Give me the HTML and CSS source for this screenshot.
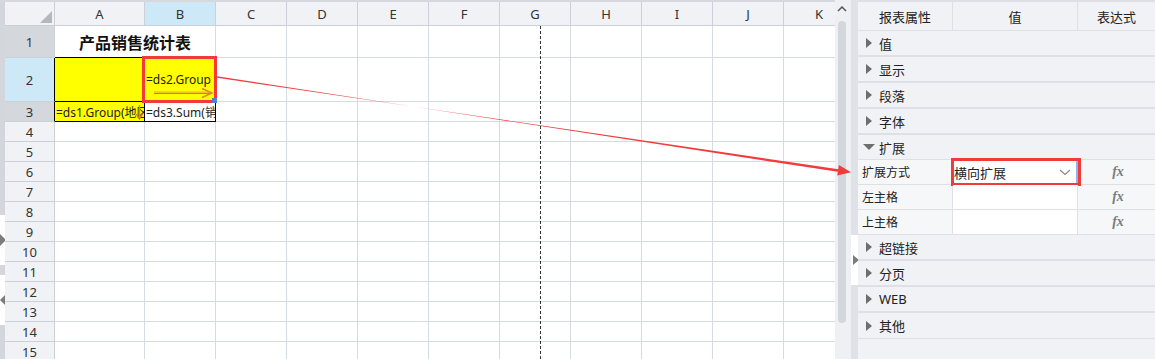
FILE: index.html
```html
<!doctype html>
<html>
<head>
<meta charset="utf-8">
<link rel="stylesheet" href="styles.css">
</head>
<body>
<div class="app">
	<div class="sheet">
		<div class="edge">
			<span class="edge-gap top"></span>
			<span class="edge-tab"><i class="tri-r"></i></span>
			<span class="edge-gap mid"></span>
			<span class="edge-tab"><i class="tri-l"></i></span>
			<span class="edge-gap rest"></span>
		</div>
		<table class="grid">
			<colgroup>
				<col class="c-hd"><col class="c-a"><col class="c-n" span="10">
			</colgroup>
			<tr class="r-hd"><th class="corner"></th><th>A</th><th class="sel">B</th><th>C</th><th>D</th><th>E</th><th>F</th><th>G</th><th>H</th><th>I</th><th>J</th><th>K</th></tr>
			<tr class="r1"><th class="dk">1</th><td colspan="2" class="title">产品销售统计表</td><td></td><td></td><td></td><td></td><td></td><td></td><td></td><td></td><td></td></tr>
			<tr class="r2"><th class="sel bdr">2</th><td class="ylw bd"></td><td class="ylw bd b2">=ds2.Group
				<svg class="expand-h" width="62" height="12" viewBox="0 0 62 12"><path d="M1 6.5 H58" stroke="#d9782a" stroke-width="1.2"/><path d="M1 5.2 H57" stroke="#f0b040" stroke-width="1.2"/><path d="M49 1.5 L59 6 L49 10.5" fill="none" stroke="#e0862c" stroke-width="1.4"/></svg>
				<span class="handle"></span></td><td></td><td></td><td></td><td></td><td></td><td></td><td></td><td></td><td></td></tr>
			<tr class="r3"><th class="dk bdr">3</th><td class="ylw bd a3">=ds1.Group(地区)
				<svg class="expand-v" width="7" height="15" viewBox="0 0 7 15"><path d="M3.5 0 V13" stroke="#e08a2c" stroke-width="1.4"/><path d="M0.5 9 L3.5 14 L6.5 9" fill="none" stroke="#d9702a" stroke-width="1.3"/></svg></td><td class="bd">=ds3.Sum(销量)</td><td></td><td></td><td></td><td></td><td></td><td></td><td></td><td></td><td></td></tr>
			<tr><th>4</th><td></td><td></td><td></td><td></td><td></td><td></td><td></td><td></td><td></td><td></td><td></td></tr>
			<tr><th>5</th><td></td><td></td><td></td><td></td><td></td><td></td><td></td><td></td><td></td><td></td><td></td></tr>
			<tr><th>6</th><td></td><td></td><td></td><td></td><td></td><td></td><td></td><td></td><td></td><td></td><td></td></tr>
			<tr><th>7</th><td></td><td></td><td></td><td></td><td></td><td></td><td></td><td></td><td></td><td></td><td></td></tr>
			<tr><th>8</th><td></td><td></td><td></td><td></td><td></td><td></td><td></td><td></td><td></td><td></td><td></td></tr>
			<tr><th>9</th><td></td><td></td><td></td><td></td><td></td><td></td><td></td><td></td><td></td><td></td><td></td></tr>
			<tr><th>10</th><td></td><td></td><td></td><td></td><td></td><td></td><td></td><td></td><td></td><td></td><td></td></tr>
			<tr><th>11</th><td></td><td></td><td></td><td></td><td></td><td></td><td></td><td></td><td></td><td></td><td></td></tr>
			<tr><th>12</th><td></td><td></td><td></td><td></td><td></td><td></td><td></td><td></td><td></td><td></td><td></td></tr>
			<tr><th>13</th><td></td><td></td><td></td><td></td><td></td><td></td><td></td><td></td><td></td><td></td><td></td></tr>
			<tr><th>14</th><td></td><td></td><td></td><td></td><td></td><td></td><td></td><td></td><td></td><td></td><td></td></tr>
			<tr><th>15</th><td></td><td></td><td></td><td></td><td></td><td></td><td></td><td></td><td></td><td></td><td></td></tr>
		</table>
		<div class="page-break"></div>
	</div>

	<div class="vscroll">
		<svg class="up" width="10" height="7" viewBox="0 0 10 7"><path d="M1 6 L5 2 L9 6" fill="none" stroke="#555" stroke-width="1.5"/></svg>
		<span class="thumb"></span>
	</div>

	<div class="splitter">
		<span class="split-gap top"></span>
		<span class="split-tab"><i class="tri-r"></i></span>
		<span class="split-gap rest"></span>
	</div>

	<div class="panel">
		<div class="phead"><span>报表属性</span><span>值</span><span>表达式</span></div>
		<div class="sec"><i class="arr"></i>值</div>
		<div class="sec"><i class="arr"></i>显示</div>
		<div class="sec"><i class="arr"></i>段落</div>
		<div class="sec"><i class="arr"></i>字体</div>
		<div class="sec open"><i class="arr-down"></i>扩展</div>
		<div class="prop">
			<span class="p-name">扩展方式</span>
			<span class="p-val picked">横向扩展
				<svg class="chev" width="12" height="7" viewBox="0 0 12 7"><path d="M1 1 L6 5.5 L11 1" fill="none" stroke="#8a8a8a" stroke-width="1.2"/></svg>
			</span>
			<span class="p-fx">fx</span>
		</div>
		<div class="prop">
			<span class="p-name">左主格</span>
			<span class="p-val"></span>
			<span class="p-fx">fx</span>
		</div>
		<div class="prop">
			<span class="p-name">上主格</span>
			<span class="p-val"></span>
			<span class="p-fx">fx</span>
		</div>
		<div class="sec"><i class="arr"></i>超链接</div>
		<div class="sec"><i class="arr"></i>分页</div>
		<div class="sec"><i class="arr"></i>WEB</div>
		<div class="sec last"><i class="arr"></i>其他</div>
	</div>

	<svg class="link-arrow" width="1155" height="359" viewBox="0 0 1155 359">
		<polygon points="217,76.3 217,77.7 838.5,169.2 837.7,171.8" fill="#f03c3c"/>
		<polygon points="851,172.3 837.2,175.4 838.9,164.9" fill="#f03c3c"/>
	</svg>
</div>
</body>
</html>
```

FILE: styles.css
```css
* {
	box-sizing: border-box;
}

body {
	margin: 0;
	font-family: "Noto Sans", "Noto Sans CJK SC", sans-serif;
	color: #222;
	background: #fff;
}

.app {
	position: relative;
	display: flex;
	width: 1155px;
	height: 359px;
	overflow: hidden;
}

/* sheet */

.sheet {
	position: relative;
	display: flex;
	width: 835px;
	flex: none;
	overflow: hidden;
	border-top: 2px solid #d5d9de;
}

.edge {
	width: 5px;
	flex: none;
	display: flex;
	flex-direction: column;
}

.edge-gap {
	background: #d3d7dc;
}

.edge-gap.top {
	height: 213px;
}

.edge-gap.mid {
	height: 10px;
}

.edge-gap.rest {
	flex: 1;
}

.edge-tab {
	height: 50px;
	background: #fff;
	display: flex;
	align-items: center;
}

.tri-r {
	width: 0;
	height: 0;
	border-top: 6px solid transparent;
	border-bottom: 6px solid transparent;
	border-left: 6px solid #7c7c7c;
}

.tri-l {
	width: 0;
	height: 0;
	border-top: 6px solid transparent;
	border-bottom: 6px solid transparent;
	border-right: 6px solid #7c7c7c;
}

.grid {
	border-collapse: separate;
	border-spacing: 0;
	table-layout: fixed;
	width: 850px;
	flex: none;
}

.c-hd {
	width: 50px;
}

.c-a {
	width: 90px;
}

.c-n {
	width: 71px;
}

.grid tr {
	height: 20px;
}

.grid tr.r-hd {
	height: 24px;
}

.grid tr.r1 {
	height: 32px;
}

.grid tr.r2 {
	height: 44px;
}

.grid th,
.grid td {
	padding: 0;
	border-right: 1px solid #d5dae3;
	border-bottom: 1px solid #d5dae3;
	white-space: nowrap;
	overflow: hidden;
	font-size: 12px;
}

.grid th {
	background: #f0f2f5;
	font-weight: normal;
	font-size: 13px;
	color: #333;
	text-align: center;
	border-color: #cbd0d8;
}

.grid th.sel {
	background: #cde9f7;
}

.grid th.dk {
	background: #d4d7dc;
}

.grid th.bdr {
	border-right-color: #000;
}

.corner {
	position: relative;
}

.corner:after {
	content: "";
	position: absolute;
	right: 2px;
	bottom: 2px;
	border-left: 12px solid transparent;
	border-bottom: 12px solid #b4b7bb;
}

.grid td.title {
	font-size: 16px;
	font-weight: bold;
	text-align: center;
	color: #111;
	border-bottom-color: #000;
}

.grid td.ylw {
	background: #ffff00;
}

.grid td.bd {
	border-right-color: #000;
	border-bottom-color: #000;
	padding-left: 1px;
}

.grid td.b2 {
	position: relative;
	overflow: visible;
}

.b2:after {
	content: "";
	position: absolute;
	left: -3px;
	right: -2px;
	top: -2px;
	bottom: -2px;
	border: 3px solid #f23a3a;
	z-index: 2;
}

.expand-h {
	position: absolute;
	left: 8px;
	top: 29px;
}

.handle {
	position: absolute;
	left: 67px;
	top: 40px;
	width: 5px;
	height: 5px;
	background: #4a80e0;
	z-index: 3;
}

.grid td.a3 {
	position: relative;
}

.expand-v {
	position: absolute;
	right: 1px;
	top: 3px;
}

.page-break {
	position: absolute;
	left: 540px;
	top: 24px;
	bottom: 0;
	width: 1px;
	background: repeating-linear-gradient(to bottom, #333 0 3px, transparent 3px 5px);
}

/* scrollbar + splitter */

.vscroll {
	width: 16px;
	flex: none;
	background: #eef0f3;
	position: relative;
	display: flex;
	flex-direction: column;
	align-items: center;
	padding-top: 5px;
}

.up {
	display: block;
	margin-left: -2px;
}

.thumb {
	width: 8px;
	height: 302px;
	margin-top: 9px;
	margin-left: -2px;
	border-radius: 4px;
	background: #d3d7dc;
}

.splitter {
	width: 7px;
	flex: none;
	display: flex;
	flex-direction: column;
}

.split-gap {
	background: #dfe3e8;
}

.split-gap.top {
	height: 235px;
}

.split-gap.rest {
	flex: 1;
}

.split-tab {
	height: 50px;
	background: #fff;
	display: flex;
	align-items: center;
	padding-left: 2px;
}

.split-tab .tri-r {
	border-top-width: 5px;
	border-bottom-width: 5px;
}

/* property panel */

.panel {
	flex: 1;
	background: #f0f2f5;
	border-top: 2px solid #dde0e5;
	font-size: 13px;
	color: #222;
}

.phead {
	display: grid;
	grid-template-columns: 95px 125px 1fr;
	height: 29px;
	border-bottom: 1px solid #dde1e6;
}

.phead span {
	display: flex;
	align-items: center;
	justify-content: center;
	border-right: 1px solid #dde1e6;
}

.phead span:last-child {
	border-right: 0;
}

.sec {
	height: 26px;
	border-bottom: 2px solid #dde1e6;
	display: flex;
	align-items: center;
	padding-left: 8px;
	gap: 7px;
}

.sec.open {
	height: 25px;
	border-bottom-width: 1px;
	padding-left: 5px;
	gap: 4px;
}

.sec.last {
	border-bottom-width: 1px;
}

.arr {
	width: 0;
	height: 0;
	border-top: 5.5px solid transparent;
	border-bottom: 5.5px solid transparent;
	border-left: 6px solid #6e6e6e;
}

.arr-down {
	width: 0;
	height: 0;
	border-left: 6px solid transparent;
	border-right: 6px solid transparent;
	border-top: 6px solid #6e6e6e;
}

.prop {
	display: grid;
	grid-template-columns: 95px 125px 1fr;
	height: 25px;
	border-bottom: 1px solid #dde1e6;
	background: #f6f7f9;
}

.prop span {
	display: flex;
	align-items: center;
	border-right: 1px solid #dde1e6;
}

.p-name {
	font-size: 12px;
	padding-left: 4px;
}

.p-val {
	background: #fff;
	padding-left: 1px;
	position: relative;
}

.p-val.picked {
	border-right: 2px solid #8cb4ee;
}

.chev {
	position: absolute;
	right: 5px;
	top: 9px;
}

.p-val.picked:after {
	content: "";
	position: absolute;
	left: -2px;
	right: -5px;
	top: -2px;
	bottom: -2px;
	border: 3px solid #f23a3a;
}

.prop .p-fx {
	justify-content: center;
	border-right: 0;
	font-family: "Liberation Serif", serif;
	font-style: italic;
	font-weight: bold;
	font-size: 14px;
	color: #7d7d7d;
	padding-left: 3px;
}

.link-arrow {
	position: absolute;
	left: 0;
	top: 0;
	pointer-events: none;
	z-index: 5;
}
```
